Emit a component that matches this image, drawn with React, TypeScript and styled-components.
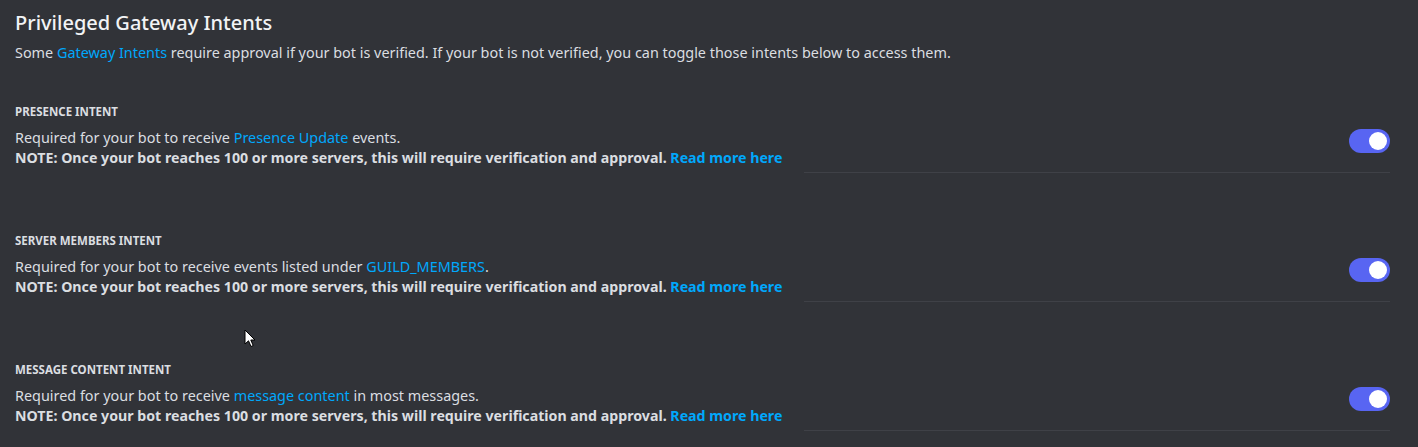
import React from 'react'
import { createGlobalStyle, styled } from 'styled-components'

const GlobalStyle = createGlobalStyle`
  html, body {
    margin: 0;
    padding: 0;
    background: #313338;
  }
  body {
    font-family: "Noto Sans", "Open Sans", sans-serif;
    color: #dbdee1;
  }
`

type Intent = {
  label: string
  before: string
  link: string
  after: string
}

const intents: Intent[] = [
  { label: 'Presence Intent', before: 'Required for your bot to receive ', link: 'Presence Update', after: ' events.' },
  { label: 'Server Members Intent', before: 'Required for your bot to receive events listed under ', link: 'GUILD_MEMBERS', after: '.' },
  { label: 'Message Content Intent', before: 'Required for your bot to receive ', link: 'message content', after: ' in most messages.' },
]

const App = () => {
  return (
    <>
      <GlobalStyle />
      <StyledPage>
        <StyledTitle>{`Privileged Gateway Intents`}</StyledTitle>
        <StyledDescription>
          {`Some `}
          <StyledLink href="#">{`Gateway Intents`}</StyledLink>
          {` require approval if your bot is verified. If your bot is not verified, you can toggle those intents below to access them.`}
        </StyledDescription>
        <StyledList>
          {intents.map((intent) => (
            <StyledSection key={intent.label}>
              <StyledLabel>{intent.label}</StyledLabel>
              <StyledRow>
                <StyledText>
                  <StyledLine>
                    {intent.before}
                    <StyledLink href="#">{intent.link}</StyledLink>
                    {intent.after}
                  </StyledLine>
                  <StyledNote>
                    {`NOTE: Once your bot reaches 100 or more servers, this will require verification and approval. `}
                    <StyledLink href="#">{`Read more here`}</StyledLink>
                  </StyledNote>
                </StyledText>
                <StyledToggle $checked>
                  <StyledKnob $checked />
                </StyledToggle>
              </StyledRow>
              <StyledDivider />
            </StyledSection>
          ))}
        </StyledList>
        <StyledCursor width="12" height="19" viewBox="0 0 12 19">
          <path d="M1 1 L1 15 L4.5 11.8 L7 17.5 L9.2 16.5 L6.8 11 L11 11 Z" fill="#ffffff" stroke="#000000" strokeWidth="1" strokeLinejoin="round" />
        </StyledCursor>
      </StyledPage>
    </>
  )
}

const StyledPage = styled.div`
  position: relative;
  padding: 11px 28px 0 15px;
  height: 447px;
  box-sizing: border-box;
  overflow: hidden;
`

const StyledTitle = styled.h2`
  margin: 0;
  font-size: 20px;
  line-height: 24px;
  font-weight: 500;
  color: #f2f3f5;
`

const StyledDescription = styled.div`
  margin-top: 8px;
  font-size: 14.4px;
  line-height: 20px;
`

const StyledLink = styled.a`
  color: #00a8fc;
  text-decoration: none;
`

const StyledList = styled.div`
  display: flex;
  flex-direction: column;
  gap: 60px;
  margin-top: 41px;
`

const StyledSection = styled.section`
  display: flex;
  flex-direction: column;
`

const StyledLabel = styled.h3`
  margin: 0;
  font-size: 11.5px;
  line-height: 16px;
  font-weight: 700;
  text-transform: uppercase;
  color: #dbdee1;
`

const StyledRow = styled.div`
  display: flex;
  justify-content: space-between;
  align-items: flex-start;
  margin-top: 8px;
  padding-bottom: 4px;
`

const StyledText = styled.div`
  display: flex;
  flex-direction: column;
`

const StyledLine = styled.div`
  font-size: 14.4px;
  line-height: 20px;
`

const StyledNote = styled.div`
  font-size: 14.2px;
  line-height: 20px;
  font-weight: 700;
`

const StyledToggle = styled.div<{ $checked?: boolean }>`
  position: relative;
  flex-shrink: 0;
  width: 41px;
  height: 24px;
  margin-top: 1px;
  border-radius: 12px;
  background: ${({ $checked }) => ($checked ? '#5865f2' : '#80848e')};
`

const StyledKnob = styled.div<{ $checked?: boolean }>`
  position: absolute;
  top: 3px;
  left: ${({ $checked }) => ($checked ? '20px' : '3px')};
  width: 18px;
  height: 18px;
  border-radius: 50%;
  background: #ffffff;
`

const StyledDivider = styled.div`
  height: 1px;
  margin-left: 789px;
  background: #3f4147;
`

const StyledCursor = styled.svg`
  position: absolute;
  left: 244px;
  top: 329px;
`

export default App
